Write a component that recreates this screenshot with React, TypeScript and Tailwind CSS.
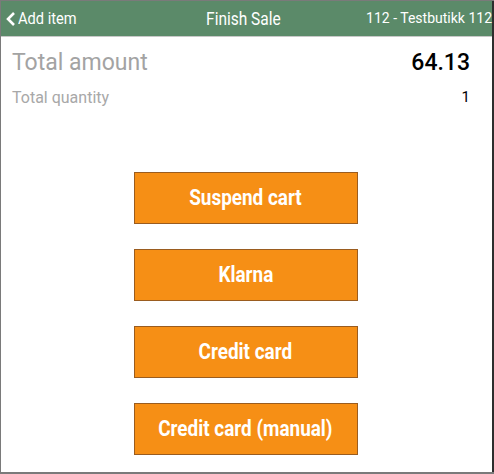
import React from 'react';

const buttons = ['Suspend cart', 'Klarna', 'Credit card', 'Credit card (manual)'];

const Condensed: React.FC<{ children: React.ReactNode; className?: string }> = ({ children, className = '' }) => (
  <span className={`inline-block origin-center scale-x-[0.86] whitespace-nowrap ${className}`}>{children}</span>
);

export default function App() {
  return (
    <div className="w-[494px] h-[474px] bg-white font-['Roboto',sans-serif] border-l border-t border-b-2 border-[#7a7a7a] flex">
      <div className="flex-1 flex flex-col border-r-2 border-[#2e2e2e]">
        <div className="h-[36px] bg-[#5b8a69] border-b border-[#c8c8c8] flex items-center text-white">
          <div className="w-[120px] flex items-center pl-[4px]">
            <svg width="12" height="16" viewBox="0 0 12 16" className="mr-[1px]">
              <path d="M9 2 L3 8 L9 14" fill="none" stroke="white" strokeWidth="2.6" />
            </svg>
            <Condensed className="text-[17px] origin-left scale-x-[0.82]">Add item</Condensed>
          </div>
          <div className="flex-1 text-center">
            <Condensed className="text-[18px]">Finish Sale</Condensed>
          </div>
          <div className="w-[126px] text-right text-[14px] whitespace-nowrap">112 - Testbutikk 112</div>
        </div>
        <div className="px-[11px] pt-[9px]">
          <div className="flex items-center justify-between">
            <span className="text-[23px] text-[#a3a3a3]">Total amount</span>
            <span className="text-[23px] font-medium text-black mr-[11px]">64.13</span>
          </div>
          <div className="flex items-center justify-between mt-[5px]">
            <span className="text-[16px] text-[#a8a8a8]">Total quantity</span>
            <span className="text-[15px] text-black mr-[11px]">1</span>
          </div>
        </div>
        <div className="flex flex-col items-center gap-[25px] mt-[62px] pr-[2px]">
          {buttons.map((b) => (
            <button
              key={b}
              className="w-[224px] h-[52px] bg-[#f68f15] border border-[#9a5c1f] text-white text-[22px] font-bold flex items-center justify-center"
            >
              <Condensed className="scale-x-[0.84]">{b}</Condensed>
            </button>
          ))}
        </div>
      </div>
    </div>
  );
}
